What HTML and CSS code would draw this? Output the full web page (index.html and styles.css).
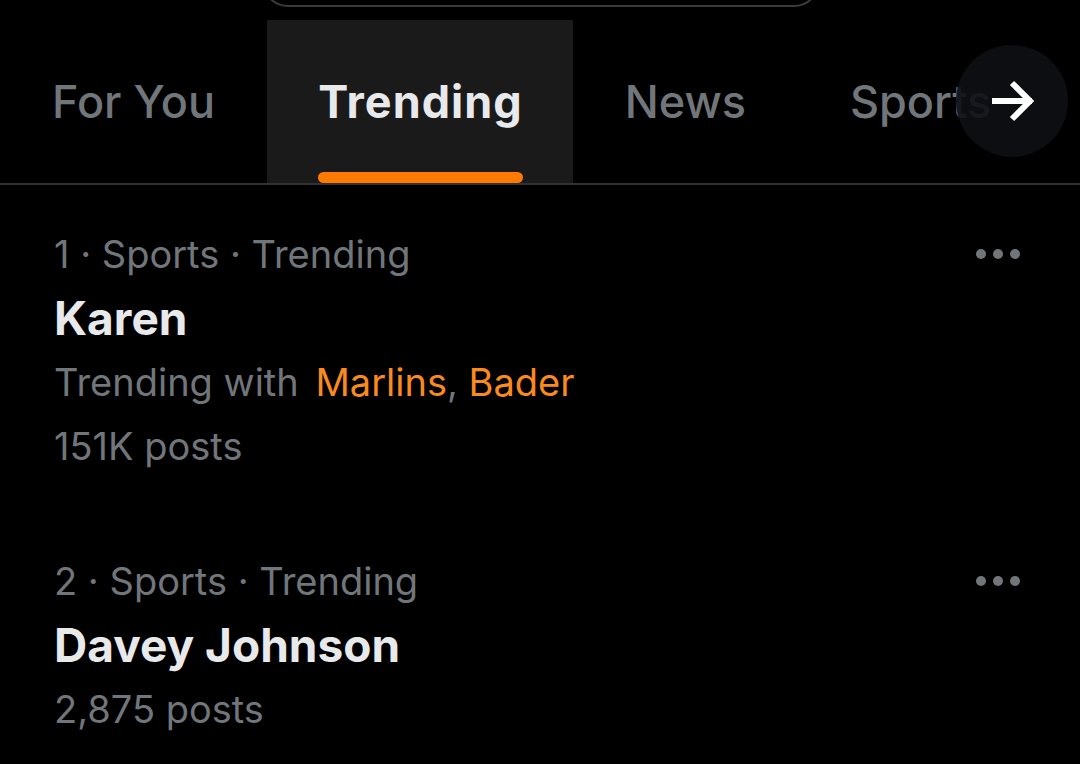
FILE: index.html
```html
<!DOCTYPE html>
<html>
<head>
<meta charset="utf-8">
<link rel="stylesheet" href="styles.css">
</head>
<body>
<div class="page">
  <div class="search"></div>
  <nav class="tabs">
    <div class="tab">For You</div>
    <div class="tab active"><span class="label">Trending</span><span class="bar"></span></div>
    <div class="tab">News</div>
    <div class="tab">Sports</div>
    <button class="next" aria-label="Next">
      <svg width="48" height="44" viewBox="0 0 48 44"><path d="M4 22H44M24 4L42 22L24 40" fill="none" stroke="#ffffff" stroke-width="6" stroke-linecap="butt" stroke-linejoin="miter"/></svg>
    </button>
  </nav>
  <div class="list">
    <div class="item">
      <div class="meta"><span>1 · Sports · Trending</span><span class="more"><i></i><i></i><i></i></span></div>
      <div class="title">Karen</div>
      <div class="with">Trending with <span class="hl first">Marlins</span>, <span class="hl">Bader</span></div>
      <div class="count">151K posts</div>
    </div>
    <div class="item">
      <div class="meta"><span>2 · Sports · Trending</span><span class="more"><i></i><i></i><i></i></span></div>
      <div class="title">Davey Johnson</div>
      <div class="count">2,875 posts</div>
    </div>
  </div>
</div>
</body>
</html>
```

FILE: styles.css
```css
html, body {
  margin: 0;
  padding: 0;
  background: #000;
}
body {
  font-family: Inter, "Noto Sans", "Liberation Sans", sans-serif;
  color: #e7e9ea;
  width: 1080px;
  height: 764px;
  overflow: hidden;
}
.page {
  position: relative;
}
.search {
  width: 554px;
  height: 50px;
  margin: -47px 0 0 262px;
  border: 2px solid #3a3b3d;
  border-radius: 26px;
}
.tabs {
  position: relative;
  display: flex;
  margin-top: 13px;
  height: 163px;
  border-bottom: 2px solid #2f3336;
  white-space: nowrap;
  overflow: hidden;
}
.tab {
  position: relative;
  display: flex;
  align-items: center;
  padding: 0 52px;
  font-size: 45px;
  font-weight: 500;
  color: #71767b;
  letter-spacing: 0;
}
.tab.active {
  background: #1a1a1a;
  color: #e7e9ea;
  font-weight: 700;
  padding: 0 50px 0 51px;
  letter-spacing: 1px;
}
.tab .bar {
  position: absolute;
  left: 51px;
  right: 50px;
  bottom: 0;
  height: 11px;
  border-radius: 6px;
  background: #ff7a00;
}
.next {
  position: absolute;
  right: 12px;
  top: 25px;
  width: 112px;
  height: 112px;
  border: 0;
  padding: 0;
  border-radius: 50%;
  background: rgba(14, 16, 20, 0.9);
  display: flex;
  align-items: center;
  justify-content: center;
}
.next svg {
  display: block;
}
.item {
  padding: 37px 60px 34px 54px;
}
.meta, .with, .count {
  font-size: 38px;
  color: #71767b;
  line-height: 64px;
  height: 64px;
}
.meta {
  display: flex;
  justify-content: space-between;
  align-items: center;
}
.more {
  display: flex;
  gap: 7px;
}
.more i {
  display: block;
  width: 10px;
  height: 10px;
  border-radius: 50%;
  background: #71767b;
}
.title {
  font-size: 46px;
  font-weight: 700;
  line-height: 64px;
  height: 64px;
  color: #e7e9ea;
}
.hl {
  color: #f98a1e;
}
.hl.first {
  margin-left: 6px;
}
```
